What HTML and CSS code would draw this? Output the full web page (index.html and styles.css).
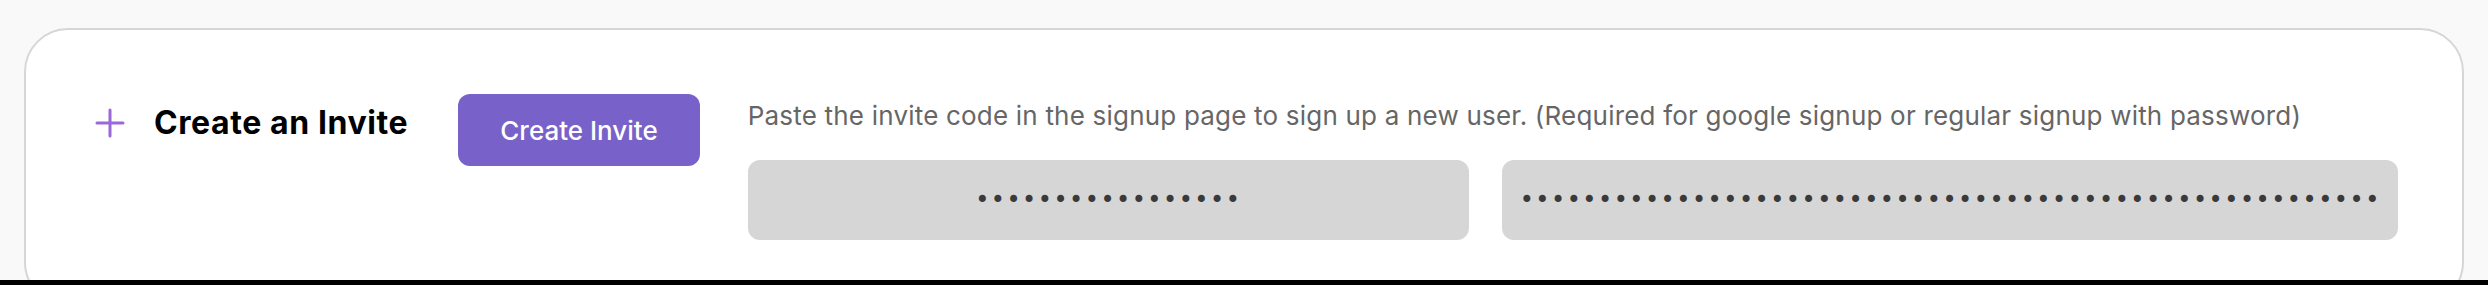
FILE: index.html
```html
<!DOCTYPE html>
<html lang="en">
<head>
  <meta charset="UTF-8" />
  <meta name="viewport" content="width=device-width, initial-scale=1" />
  <title>Invites</title>
  <link rel="stylesheet" href="styles.css">
</head>
<body>
  <div class="viewport">
    <div class="stage">
      <section class="invite-card">
        <div class="invite-left">
          <div class="invite-title">
            <svg class="plus-icon" width="40" height="40" viewBox="0 0 40 40" aria-hidden="true">
              <path d="M20 7v26M7 20h26" fill="none" stroke="#9a69d8" stroke-width="3" stroke-linecap="round" />
            </svg>
            <h2>Create an Invite</h2>
          </div>
          <button class="invite-btn">Create Invite</button>
        </div>

        <div class="invite-right">
          <p class="invite-hint">Paste the invite code in the signup page to sign up a new user. (Required for google signup or regular signup with password)</p>
          <div class="code-row">
            <div class="code-field code-short">•••••••••••••••••</div>
            <div class="code-field code-long">•••••••••••••••••••••••••••••••••••••••••••••••••••••••</div>
          </div>
        </div>
      </section>
    </div>
    <div class="bottom-bar"></div>
  </div>
</body>
</html>
```

FILE: styles.css
```css
body {
  margin: 0;
  font-family: "Inter", "Noto Sans", sans-serif;
  background-color: #f9f9f9;
  color: #000;
}

.viewport {
  height: 285px;
  display: flex;
  flex-direction: column;
  overflow: hidden;
}

.stage {
  flex: 1;
  overflow: hidden;
  padding: 28px 24px 0 24px;
}

/* Kortti */
.invite-card {
  display: flex;
  align-items: flex-start;
  gap: 48px;
  padding: 64px 64px 64px 64px;
  background-color: #fff;
  border: 2px solid #d6d6d6;
  border-radius: 44px;
}

.invite-left {
  display: flex;
  align-items: flex-start;
  gap: 50px;
}

.invite-title {
  display: flex;
  align-items: center;
  gap: 24px;
  margin-top: 9px;
}

.plus-icon {
  display: block;
}

.invite-title h2 {
  margin: 0;
  font-size: 32px;
  line-height: 40px;
  font-weight: 700;
  letter-spacing: 0.6px;
  white-space: nowrap;
}

.invite-btn {
  height: 72px;
  padding: 0 42px;
  border: none;
  border-radius: 12px;
  background-color: #7862c9;
  color: #fff;
  font-family: inherit;
  font-size: 26px;
  font-weight: 500;
  cursor: pointer;
  white-space: nowrap;
}

.invite-right {
  flex: 1;
  min-width: 0;
}

.invite-hint {
  margin: 3px 0 25px 0;
  font-size: 26px;
  line-height: 38px;
  letter-spacing: 0.2px;
  color: #666;
  white-space: nowrap;
}

.code-row {
  display: flex;
  gap: 33px;
}

.code-field {
  height: 80px;
  line-height: 80px;
  border-radius: 12px;
  background-color: #d6d6d6;
  color: #3a3a3a;
  font-family: "DejaVu Sans", sans-serif;
  font-size: 24px;
  letter-spacing: 1.5px;
  white-space: nowrap;
  overflow: hidden;
}

.code-short {
  flex: 0 0 721px;
  text-align: center;
}

.code-long {
  flex: 1;
  padding: 0 18px;
}

.bottom-bar {
  height: 5px;
  background-color: #000;
}
```
